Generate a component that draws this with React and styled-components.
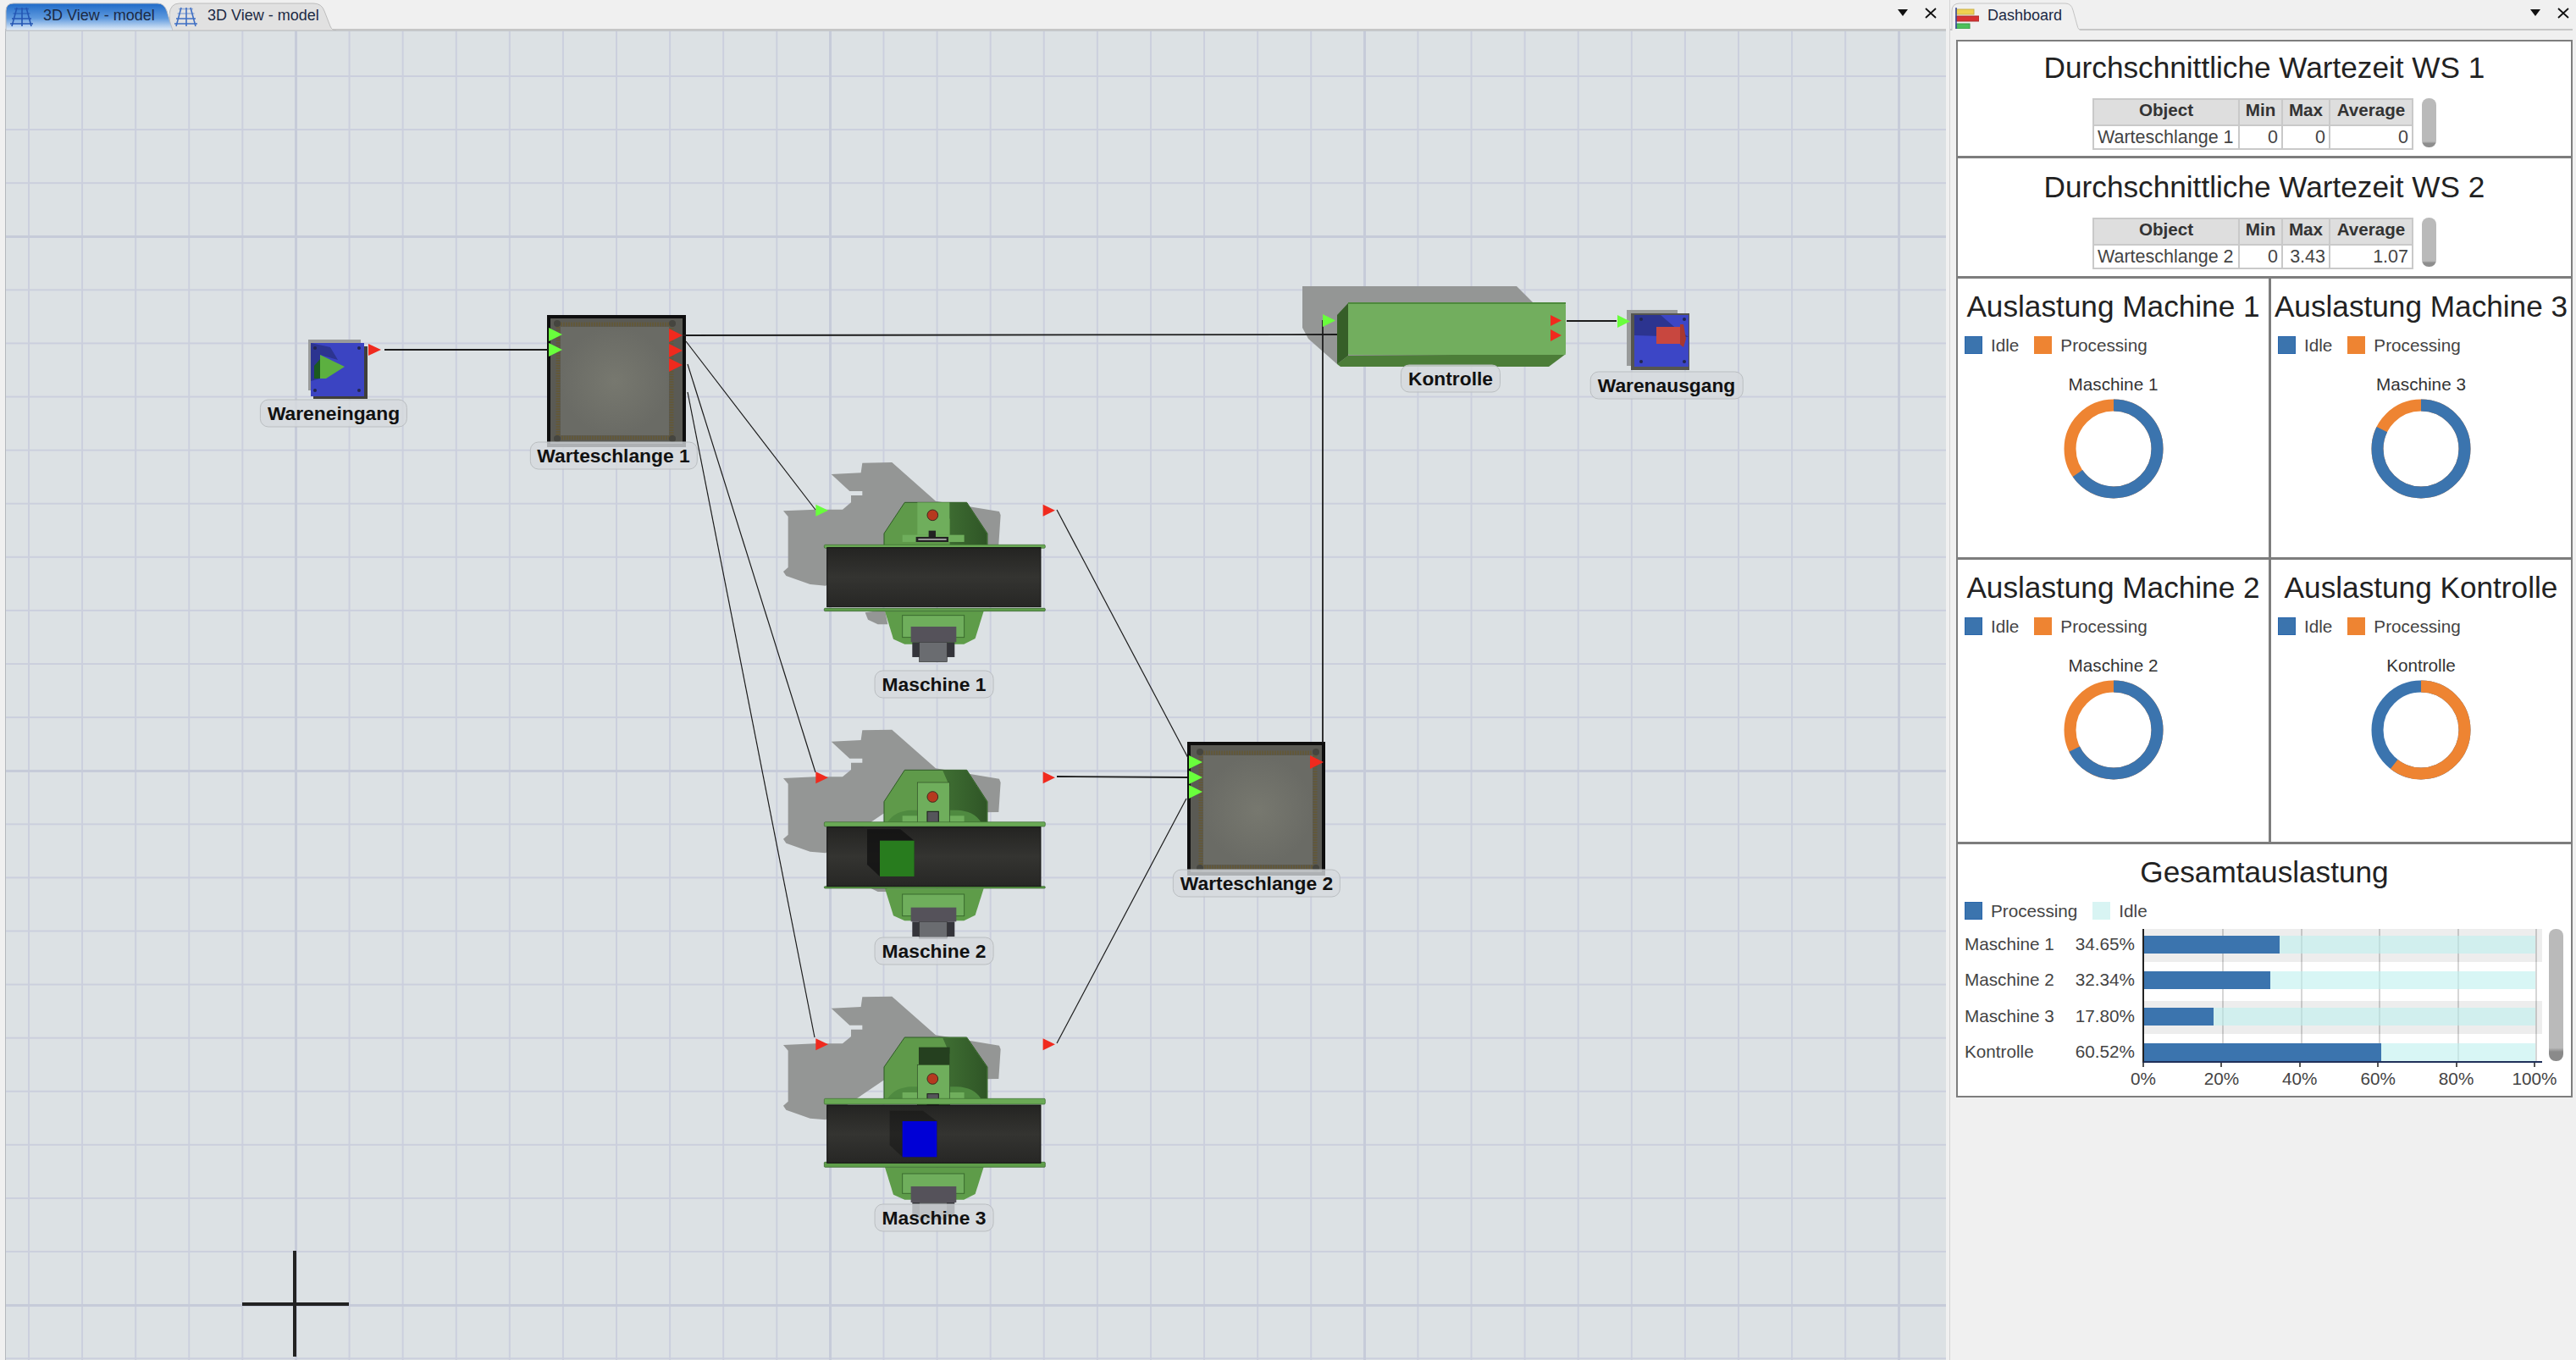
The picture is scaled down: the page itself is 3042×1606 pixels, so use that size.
import React from 'react';
import styled, { createGlobalStyle } from 'styled-components';

const GlobalStyle = createGlobalStyle`
    html, body {
        margin: 0;
        height: 100%;
        overflow: hidden;
        background: #f0f0f0;
        font-family: 'Liberation Sans', Arial, sans-serif;
    }
    #root {
        height: 100%;
    }
`;

const Main = styled.div`
    display: flex;
    width: 3042px;
    height: 1606px;
    background: #f0f0f0;
    color: #222;
`;

const LeftPane = styled.section`
    width: 2298px;
    padding-left: 6px;
    box-sizing: border-box;
    display: flex;
    flex-direction: column;
`;

const RightPane = styled.section`
    flex: 1;
    margin-left: 4px;
    padding-right: 4px;
    display: flex;
    flex-direction: column;
    border-left: 1px solid #d4d4d4;
    box-sizing: border-box;
`;

const TabBar = styled.div`
    height: 36px;
    box-sizing: border-box;
    display: flex;
    align-items: flex-end;
    border-bottom: 2px solid #c6c6c6;
    padding: 0 ${(p) => p.$endPad}px 0 ${(p) => p.$startPad}px;
`;

const Tab = styled.div`
    position: relative;
    z-index: ${(p) => (p.$front ? 1 : 0)};
    width: ${(p) => p.$width}px;
    height: 33px;
    margin-bottom: -2px;
    display: flex;
    align-items: center;
    gap: ${(p) => p.$gap || 12}px;
    padding-left: 5px;
    box-sizing: border-box;
    font-size: 18px;
    color: #1c2a44;
`;

const TabShape = styled.svg`
    position: absolute;
    left: 0;
    top: 0;
`;

const TabIcon = styled.svg`
    position: relative;
    flex: none;
`;

const TabText = styled.span`
    position: relative;
    padding-bottom: 2px;
`;

const PaneControls = styled.div`
    margin-left: auto;
    align-self: flex-start;
    display: flex;
    align-items: center;
    gap: 20px;
    height: 30px;
`;

const Canvas = styled.div`
    position: relative;
    flex: 1;
    border-left: 1px solid #b4b8bc;
    border-top: 1px solid #c4c8cc;
    background-color: #dce1e4;
    background-image:
        linear-gradient(to right, #c6cbd9 0 3px, transparent 3px),
        linear-gradient(to bottom, #c6cbd9 0 3px, transparent 3px),
        linear-gradient(to right, #cbcfdd 0 2px, transparent 2px),
        linear-gradient(to bottom, #cbcfdd 0 2px, transparent 2px);
    background-size: 631px 631px, 631px 631px, 63.1px 63.1px, 63.1px 63.1px;
    background-position: 341px 0, 0 241px, 26px 0, 0 52px;
    overflow: hidden;
`;

const Scene = styled.svg`
    display: block;
    position: absolute;
    left: 0;
    top: 0;
`;

const NodeLabel = styled.div`
    position: absolute;
    left: ${(p) => p.$x - 7}px;
    top: ${(p) => p.$y - 37}px;
    transform: translate(-50%, -50%);
    height: 31px;
    line-height: 31px;
    padding: 0 8px;
    border: 1.5px solid #babec1;
    border-radius: 10px;
    background: rgba(214, 218, 221, 0.8);
    font-size: 22.8px;
    font-weight: 700;
    color: #111;
    white-space: nowrap;
`;

const Board = styled.div`
    margin: 11px 0 0 7px;
    border: 2px solid #7d7d7d;
    border-bottom: 0;
    background: #fff;
`;

const WaitPanel = styled.div`
    height: ${(p) => p.$height}px;
    box-sizing: border-box;
    border-bottom: 3px solid #7d7d7d;
    padding-top: ${(p) => p.$top}px;
    display: flex;
    flex-direction: column;
    align-items: center;
`;

const Title = styled.h2`
    margin: 0;
    font-size: 35.2px;
    font-weight: 400;
    line-height: 40px;
    color: #222;
    white-space: nowrap;
`;

const TableRow = styled.div`
    margin-top: 16px;
    display: flex;
    gap: 10px;
`;

const Table = styled.table`
    border-collapse: collapse;
    table-layout: fixed;
    width: 377px;
    color: #444;
`;

const HeadCell = styled.th`
    height: 30px;
    box-sizing: border-box;
    padding: 0 0 5px;
    border: 2px solid #c9c9c9;
    background: #dedede;
    font-size: 20.6px;
    line-height: 24px;
    font-weight: 700;
    color: #333;
    text-align: center;
`;

const Cell = styled.td`
    height: 28px;
    box-sizing: border-box;
    padding: 0 4px;
    border: 2px solid #c9c9c9;
    font-size: 21.5px;
    line-height: 24px;
    text-align: ${(p) => (p.$right ? 'right' : 'left')};
    white-space: nowrap;
    overflow: hidden;
`;

const ScrollThumb = styled.div`
    width: 17px;
    border-radius: 8px;
    background: linear-gradient(to bottom, #bababa 0 88%, #8e8e8e 92%);
    height: ${(p) => p.$height}px;
    flex: none;
`;

const DonutGrid = styled.div`
    display: grid;
    grid-template-columns: 367px 1fr;
    grid-template-rows: 332px 336px;
`;

const DonutCell = styled.div`
    box-sizing: border-box;
    padding-top: 13px;
    border-bottom: 3px solid #7d7d7d;
    border-left: ${(p) => (p.$divider ? '3px solid #7d7d7d' : '0')};
    display: flex;
    flex-direction: column;
    align-items: center;
`;

const Legend = styled.div`
    align-self: flex-start;
    display: flex;
    gap: 18px;
    height: 21px;
    margin: 15px 0 0 ${(p) => p.$left}px;
    font-size: 20.7px;
    color: #444;
`;

const LegendItem = styled.div`
    display: flex;
    align-items: center;
    gap: 10px;
    line-height: 21px;
`;

const Swatch = styled.span`
    width: 21px;
    height: 21px;
    box-sizing: border-box;
    background: ${(p) => p.$color};
    border: 1px solid ${(p) => p.$edge || p.$color};
`;

const DonutName = styled.div`
    margin-top: 24px;
    height: 24px;
    line-height: 24px;
    font-size: 20.7px;
    color: #333;
`;

const DonutSvg = styled.svg`
    display: block;
    margin-top: 5px;
`;

const TotalPanel = styled.div`
    height: 299px;
    box-sizing: border-box;
    padding-top: 13px;
    border-bottom: 2px solid #7d7d7d;
    display: flex;
    flex-direction: column;
    align-items: center;
`;

const TotalChart = styled.div`
    align-self: flex-start;
    margin: 11px 0 0 8px;
    display: flex;
`;

const RowLabels = styled.div`
    width: 210px;
    display: flex;
    flex-direction: column;
    gap: 3.3px;
    font-size: 20.7px;
    color: #444;
`;

const RowLabel = styled.div`
    height: 39px;
    line-height: 36px;
    display: flex;
    justify-content: space-between;
    padding-right: 9px;
`;

const PlotColumn = styled.div`
    width: 472px;
`;

const Plot = styled.div`
    position: relative;
    height: 156px;
    overflow: hidden;
    border-left: 2px solid #222;
    border-bottom: 2px solid #20305a;
    display: flex;
    flex-direction: column;
    gap: 3.3px;
`;

const GridLine = styled.div`
    position: absolute;
    top: 0;
    bottom: 0;
    left: ${(p) => p.$pct * 4.62}px;
    width: 2px;
    background: #d6d6d6;
`;

const Band = styled.div`
    position: relative;
    flex: none;
    height: 39px;
    box-sizing: border-box;
    padding-top: 8px;
    background: ${(p) => (p.$shaded ? 'rgba(0, 0, 0, 0.07)' : 'transparent')};
`;

const BarStack = styled.div`
    display: flex;
    width: 462px;
    height: 21px;
`;

const BarPart = styled.div`
    height: 100%;
    background: ${(p) => p.$color};
`;

const AxisTicks = styled.div`
    display: flex;
    justify-content: space-between;
    width: 464px;
    height: 5px;
`;

const Tick = styled.span`
    width: 2px;
    background: #555;
`;

const AxisLabels = styled.div`
    display: flex;
    justify-content: space-between;
    width: 464px;
    margin-top: 2px;
    font-size: 20.7px;
    color: #444;
`;

const AxisLabel = styled.span`
    width: 2px;
    display: flex;
    justify-content: center;
    white-space: nowrap;
`;

const ChartScroll = styled(ScrollThumb)`
    margin-left: 8px;
    background: linear-gradient(to bottom, #bababa 0 90%, #8a8a8a 93%);
`;

const BLUE = '#3b74ae';
const ORANGE = '#ee8432';

const GridIcon = ({ faded }) => (
    <TabIcon width="28" height="24" viewBox="0 0 28 24" fill="none" stroke={faded ? '#3f6fc4' : '#2456b4'} strokeWidth="1.6">
        <path d="M6 2.5H23M4.5 8H24.5" opacity={faded ? 0.45 : 0.7} />
        <path d="M3 14H26M1 20H28" />
        <path d="M9 1L3 23M15 1V23M20 1L26 23" />
    </TabIcon>
);

const ChartIcon = () => (
    <TabIcon width="28" height="28" viewBox="0 0 28 28">
        <rect x="1" y="5" width="21" height="6" fill="#f0d050" stroke="#c9b24a" />
        <rect x="1" y="13" width="27" height="6" fill="#d83232" stroke="#a82a2a" />
        <rect x="1" y="22" width="16" height="6" fill="#4cc05a" stroke="#3a9a48" />
        <path d="M1 3V30" stroke="#3a4a9a" strokeWidth="1.6" />
    </TabIcon>
);

const PaneButtons = () => (
    <PaneControls>
        <svg width="12" height="8" viewBox="0 0 12 8"><path d="M0 0H12L6 8Z" fill="#111" /></svg>
        <svg width="14" height="13" viewBox="0 0 14 13"><path d="M1 1L13 12M13 1L1 12" stroke="#111" strokeWidth="1.8" /></svg>
    </PaneControls>
);

const Port = ({ x, y, out, w = 16, h = 16 }) => (
    <polygon points={`${x},${y} ${x + w},${y + h / 2} ${x},${y + h}`} fill={out ? '#f02a1e' : '#69ff3c'} />
);

const Queue = ({ outer, core }) => {
    const [x, y, w, h] = outer;
    const [cx, cy, cw, ch] = core;
    return (
        <g>
            <rect x={x + 2} y={y + 2} width={w - 4} height={h - 4} fill="#5a5a54" stroke="#0e0e0e" strokeWidth="4" />
            <rect x={cx - 3} y={cy - 3} width={cw + 6} height={ch + 6} fill="none" stroke="#62583a" strokeWidth="5" strokeDasharray="2 1" />
            <rect x={cx} y={cy} width={cw} height={ch} fill="url(#queueCore)" />
            {[[cx - 4, cy - 4], [cx + cw + 4, cy - 4], [cx - 4, cy + ch + 4], [cx + cw + 4, cy + ch + 4]].map(([a, b]) => (
                <circle key={`${a}-${b}`} cx={a} cy={b} r="4" fill="#45453f" />
            ))}
        </g>
    );
};

const Source = () => (
    <g>
        <rect x="364" y="401" width="62" height="60" fill="#999b9b" />
        <rect x="370" y="409" width="64" height="62" fill="#3f3f3a" />
        <rect x="367" y="405" width="63" height="63" fill="#3b44c2" />
        <polygon points="367,405 390,410 399,425 378,419 378,447 367,450" fill="#2c3490" />
        <polygon points="371,447 371,432 378,424 378,447" fill="#1b5a1f" />
        <polygon points="378,419 407,433 385,447 378,447" fill="#5cb040" />
        {[[372, 411], [424, 411], [372, 461], [424, 461]].map(([a, b]) => (
            <circle key={`${a}-${b}`} cx={a} cy={b} r="2" fill="#23264f" />
        ))}
    </g>
);

const Sink = () => (
    <g>
        <rect x="1921" y="366" width="60" height="66" fill="#999b9b" />
        <rect x="1926" y="370" width="69" height="67" fill="#55554f" />
        <rect x="1930" y="372" width="64" height="61" fill="#3c46c6" />
        <polygon points="1930,372 1961,372 1976,385 1994,398 1930,396" fill="#2c3490" />
        <rect x="1956" y="386" width="28" height="20" fill="#c8473f" />
        <polygon points="1984,383 1988,383 1991,400 1988,410 1984,407" fill="#a83830" />
        {[[1938, 377], [1989, 377], [1938, 427], [1989, 427]].map(([a, b]) => (
            <circle key={`${a}-${b}`} cx={a} cy={b} r="2" fill="#23264f" />
        ))}
    </g>
);

const Kontrolle = () => (
    <g>
        <polygon points="1538,338 1791,338 1811,358 1811,420 1579,430 1545,400 1538,387" fill="#949695" />
        <polygon points="1579,372 1592,358 1592,420 1579,430" fill="#365f28" />
        <polygon points="1579,430 1592,420 1849,418 1829,433 1583,433" fill="#4c7d38" />
        <rect x="1592" y="358" width="257" height="61" rx="2" fill="#72ae5e" />
        <path d="M1592 358H1849" stroke="#4d8a3c" strokeWidth="2" />
    </g>
);

// machine parts are given in 3x crop units, the state of the head differs per machine
const MACHINES = [
    { oy: 530, dy: 0, top: 190, mid: 300, rail: 340, railH: 12, belt: 350, beltEnd: 560, low: 565, lowH: 10, panel: 190, panelEnd: 305, btn: 235, plate: 305, plateH: 25, bodyTop: 575, bodyEnd: 692, inner: 590, innerEnd: 668, box: 630, boxEnd: 685, legEnd: 738, tagEnd: 755 },
    { oy: 850, dy: -13, top: 178, mid: 290, rail: 362, railH: 16, belt: 380, beltEnd: 590, low: 590, lowH: 7, panel: 222, panelEnd: 372, btn: 273, square: 325, plate: 340, plateH: 22, bodyTop: 598, bodyEnd: 712, inner: 618, innerEnd: 695, box: 665, boxEnd: 715, legEnd: 768, tagEnd: 776, item: { x: 417, y: 428, color: '#287c1e', sx: 372, sy: 388, shade: 0.8 } },
    { oy: 1170, dy: -28, top: 165, mid: 270, rail: 382, railH: 20, belt: 405, beltEnd: 610, low: 607, lowH: 18, panel: 262, panelEnd: 405, btn: 312, square: 365, slot: 200, plate: 360, plateH: 40, bodyTop: 625, bodyEnd: 740, inner: 648, innerEnd: 718, box: 693, boxEnd: 750, legEnd: 800, tagEnd: 810, item: { x: 497, y: 462, color: '#0000d6', sx: 452, sy: 425, shade: 0.45 } },
];

const SHADOW = '245,90 350,85 355,50 460,48 615,185 840,222 845,235 838,340 430,345 225,485 170,480 85,450 75,435 92,420 92,240 75,220 190,215 285,215 315,190 315,165 355,165 355,150 310,150';

const ItemOnBelt = ({ item }) => {
    const { x, y, sx, sy, color, shade } = item;
    return (
        <g>
            <polygon points={`${sx},${sy} ${sx + 118},${sy} ${x + 122},${y} ${x + 122},${y + 127} ${x},${y + 127} ${sx},${y + 85}`} fill="#111" opacity={shade} />
            <rect x={x} y={y} width="122" height="127" fill={color} />
        </g>
    );
};

const Machine = ({ m }) => (
    <g transform={`translate(900 ${m.oy}) scale(0.3333)`}>
        <polygon points={SHADOW} fill="#949695" transform={`translate(0 ${m.dy})`} />
        <polygon points={`365,${580 + m.dy} 375,${605 + m.dy} 410,${622 + m.dy} 445,${622 + m.dy} 435,${570 + m.dy}`} fill="#949695" />
        <polygon points={`505,${m.top} 725,${m.top} 798,${m.mid} 798,${m.rail + 4} 432,${m.rail + 4} 432,${m.mid}`} fill="#5f9a4a" stroke="#2e5a24" strokeWidth="3" />
        <polygon points={`640,${m.top + 2} 725,${m.top + 2} 796,${m.mid} 796,${m.rail} 665,${m.rail} 665,${m.top + 60}`} fill="url(#hoodShade)" />
        {m.slot && <rect x="555" y={m.slot} width="110" height={m.panel - m.slot} fill="#25401f" />}
        {m.square && <path d={`M445 ${m.rail} Q470 ${m.plate - 18} 530 ${m.plate - 20} H690 Q750 ${m.plate - 18} 775 ${m.rail}Z`} fill="#4f8a40" />}
        <rect x="497" y={m.plate} width="219" height={m.plateH} fill="#6fae5c" />
        <rect x="550" y={m.panel} width="114" height={m.panelEnd - m.panel} fill="#6fae5c" stroke={m.square ? '#2c4a24' : 'none'} strokeWidth="2" />
        <circle cx="604" cy={m.btn} r="19" fill="#b5391f" stroke="#3d2a1f" strokeWidth="3" />
        {m.square ? (
            <rect x="585" y={m.square} width="40" height="38" fill="#55555a" stroke="#1a1a1a" strokeWidth="3" />
        ) : (
            <g>
                <rect x="590" y="290" width="25" height="22" fill="#222" />
                <rect x="545" y="312" width="115" height="18" fill="#222" />
                <rect x="553" y="318" width="100" height="6" fill="#999" />
            </g>
        )}
        <polygon points={`435,${m.bodyTop} 785,${m.bodyTop} 755,${m.bodyEnd - 20} 715,${m.bodyEnd} 505,${m.bodyEnd} 465,${m.bodyEnd - 18}`} fill="#5e9c49" />
        <rect x="497" y={m.inner} width="219" height={m.innerEnd - m.inner} fill="#6fae5c" stroke="#3a6a2e" strokeWidth="3" />
        <rect x="532" y={m.boxEnd} width="150" height={m.legEnd - m.boxEnd} fill="#34343a" />
        <rect x="557" y={m.boxEnd} width="98" height={m.tagEnd - m.boxEnd} fill="#6a6c70" stroke="#333" strokeWidth="2" />
        <rect x="527" y={m.box} width="161" height={m.boxEnd - m.box} fill="#55525a" />
        <rect x="220" y={m.rail} width="783" height={m.railH} rx="4" fill="#6aa955" stroke="#3a6a2e" strokeWidth="2" />
        <rect x="220" y={m.low} width="783" height={m.lowH} rx="3" fill="#5f9e4a" stroke="#2e5a24" strokeWidth="2" />
        <rect x="230" y={m.belt} width="757" height={m.beltEnd - m.belt} fill="url(#beltFace)" stroke="#111" strokeWidth="3" />
        {m.item && <ItemOnBelt item={m.item} />}
        <Port x={190} y={197 + m.dy} w={44} h={42} out={m.dy !== 0} />
        <Port x={995} y={197 + m.dy} w={43} h={42} out />
    </g>
);

const LINKS = [
    [454, 413, 647, 413, 2],
    [806, 396, 1579, 395, 1.8],
    [810, 403, 963, 602, 1.2],
    [812, 430, 963, 912, 1.2],
    [812, 463, 962, 1225, 1.2],
    [1248, 602, 1403, 895, 1.2],
    [1248, 917, 1402, 918, 1.8],
    [1248, 1232, 1401, 943, 1.2],
    [1562, 877, 1562, 378, 1.8],
    [1850, 379, 1909, 379, 1.8],
];

const SceneLabels = [
    ['Wareneingang', 394, 488],
    ['Warteschlange 1', 724.5, 538],
    ['Kontrolle', 1713, 446.5],
    ['Warenausgang', 1968, 455],
    ['Maschine 1', 1103, 807.5],
    ['Maschine 2', 1103, 1122.5],
    ['Maschine 3', 1103, 1438],
    ['Warteschlange 2', 1484, 1043],
];

const ModelView = () => (
    <Canvas>
        <Scene width="2290" height="1569" viewBox="7 37 2290 1569">
            <defs>
                <radialGradient id="queueCore">
                    <stop offset="0" stopColor="#77786f" />
                    <stop offset="1" stopColor="#6a6b65" />
                </radialGradient>
                <linearGradient id="hoodShade" x1="0" y1="0" x2="1" y2="0">
                    <stop offset="0" stopColor="#3f6f33" />
                    <stop offset="1" stopColor="#2f5526" />
                </linearGradient>
                <linearGradient id="beltFace" x1="0" y1="0" x2="0" y2="1">
                    <stop offset="0" stopColor="#242422" />
                    <stop offset="0.5" stopColor="#343431" />
                    <stop offset="1" stopColor="#272725" />
                </linearGradient>
            </defs>
            <Source />
            <Sink />
            <Kontrolle />
            <Queue outer={[646, 372, 164, 156]} core={[662, 386, 128, 128]} />
            <Queue outer={[1402, 876, 163, 158]} core={[1421, 892, 129, 129]} />
            {MACHINES.map((m) => (
                <Machine key={m.oy} m={m} />
            ))}
            {LINKS.map(([a, b, c, d, w]) => (
                <line key={`${a}-${b}-${c}`} x1={a} y1={b} x2={c} y2={d} stroke="#1c1c1c" strokeWidth={w} />
            ))}
            <Port x={435} y={406} w={15} h={14} out />
            <Port x={648} y={387} />
            <Port x={648} y={405} />
            <Port x={790} y={388} out />
            <Port x={790} y={406} out />
            <Port x={790} y={423} out />
            <Port x={1404} y={892} />
            <Port x={1404} y={910} />
            <Port x={1404} y={927} />
            <Port x={1547} y={892} out />
            <Port x={1562} y={371} w={15} h={15} />
            <Port x={1831} y={372} w={13} h={13} out />
            <Port x={1831} y={389} w={13} h={14} out />
            <Port x={1910} y={372} w={15} h={15} />
            <path d="M348 1477V1602M286 1540H412" stroke="#222" strokeWidth="4" fill="none" />
        </Scene>
        {SceneLabels.map(([text, x, y]) => (
            <NodeLabel key={text} $x={x} $y={y}>{text}</NodeLabel>
        ))}
    </Canvas>
);

const WaitTable = ({ name, min, max, average }) => (
    <TableRow>
        <Table>
            <colgroup>
                <col width="172" />
                <col width="51" />
                <col width="56" />
                <col width="98" />
            </colgroup>
            <thead>
                <tr>
                    <HeadCell>Object</HeadCell>
                    <HeadCell>Min</HeadCell>
                    <HeadCell>Max</HeadCell>
                    <HeadCell>Average</HeadCell>
                </tr>
            </thead>
            <tbody>
                <tr>
                    <Cell>{name}</Cell>
                    <Cell $right>{min}</Cell>
                    <Cell $right>{max}</Cell>
                    <Cell $right>{average}</Cell>
                </tr>
            </tbody>
        </Table>
        <ScrollThumb $height={58} />
    </TableRow>
);

const Donut = ({ processing, processingFirst }) => {
    const r = 51.5;
    const c = 2 * Math.PI * r;
    const first = processingFirst ? processing : 100 - processing;
    return (
        <DonutSvg width="118" height="118" viewBox="0 0 118 118">
            <circle cx="59" cy="59" r={r} fill="none" strokeWidth="14" stroke={processingFirst ? BLUE : ORANGE} />
            <circle
                cx="59"
                cy="59"
                r={r}
                fill="none"
                strokeWidth="14"
                stroke={processingFirst ? ORANGE : BLUE}
                strokeDasharray={`${(first / 100) * c} ${c}`}
                transform="rotate(-90 59 59)"
            />
        </DonutSvg>
    );
};

const DONUTS = [
    { title: 'Auslastung Machine 1', name: 'Maschine 1', processing: 34.65 },
    { title: 'Auslastung Machine 3', name: 'Maschine 3', processing: 17.8, divider: true },
    { title: 'Auslastung Machine 2', name: 'Maschine 2', processing: 32.34 },
    { title: 'Auslastung Kontrolle', name: 'Kontrolle', processing: 60.52, processingFirst: true, divider: true },
];

const TOTALS = [
    { name: 'Maschine 1', value: 34.65 },
    { name: 'Maschine 2', value: 32.34 },
    { name: 'Maschine 3', value: 17.8 },
    { name: 'Kontrolle', value: 60.52 },
];

const TICKS = [0, 20, 40, 60, 80, 100];

const TotalUsage = () => (
    <TotalPanel>
        <Title>Gesamtauslastung</Title>
        <Legend $left={8}>
            <LegendItem><Swatch $color={BLUE} $edge="#2a67ac" />Processing</LegendItem>
            <LegendItem><Swatch $color="#d8f4f3" />Idle</LegendItem>
        </Legend>
        <TotalChart>
            <RowLabels>
                {TOTALS.map((row) => (
                    <RowLabel key={row.name}>
                        <span>{row.name}</span>
                        <span>{row.value.toFixed(2)}%</span>
                    </RowLabel>
                ))}
            </RowLabels>
            <PlotColumn>
                <Plot>
                    {TICKS.slice(1).map((t) => (
                        <GridLine key={t} $pct={t} />
                    ))}
                    {TOTALS.map((row, i) => (
                        <Band key={row.name} $shaded={i % 2 === 0}>
                            <BarStack>
                                <BarPart $color={BLUE} style={{ width: `${row.value}%` }} />
                                <BarPart $color="rgba(190, 240, 238, 0.6)" style={{ width: `${100 - row.value}%` }} />
                            </BarStack>
                        </Band>
                    ))}
                </Plot>
                <AxisTicks>
                    {TICKS.map((t) => (
                        <Tick key={t} />
                    ))}
                </AxisTicks>
                <AxisLabels>
                    {TICKS.map((t) => (
                        <AxisLabel key={t}>{t}%</AxisLabel>
                    ))}
                </AxisLabels>
            </PlotColumn>
            <ChartScroll $height={156} />
        </TotalChart>
    </TotalPanel>
);

const Dashboard = () => (
    <Board>
        <WaitPanel $height={138} $top={11}>
            <Title>Durchschnittliche Wartezeit WS 1</Title>
            <WaitTable name="Warteschlange 1" min="0" max="0" average="0" />
        </WaitPanel>
        <WaitPanel $height={142} $top={14}>
            <Title>Durchschnittliche Wartezeit WS 2</Title>
            <WaitTable name="Warteschlange 2" min="0" max="3.43" average="1.07" />
        </WaitPanel>
        <DonutGrid>
            {DONUTS.map((d) => (
                <DonutCell key={d.title} $divider={d.divider}>
                    <Title>{d.title}</Title>
                    <Legend $left={8}>
                        <LegendItem><Swatch $color={BLUE} $edge="#2a67ac" />Idle</LegendItem>
                        <LegendItem><Swatch $color={ORANGE} />Processing</LegendItem>
                    </Legend>
                    <DonutName>{d.name}</DonutName>
                    <Donut processing={d.processing} processingFirst={d.processingFirst} />
                </DonutCell>
            ))}
        </DonutGrid>
        <TotalUsage />
    </Board>
);

const App = () => (
    <Main>
        <GlobalStyle />
        <LeftPane>
            <TabBar $startPad={0} $endPad={11}>
                <Tab $width={194} $front>
                    <TabShape width="198" height="33" viewBox="0 0 198 33">
                        <defs>
                            <linearGradient id="tabActive" x1="0" y1="0" x2="0" y2="1">
                                <stop offset="0" stopColor="#1f6ac8" />
                                <stop offset="0.55" stopColor="#5f9ade" />
                                <stop offset="1" stopColor="#e6eff9" />
                            </linearGradient>
                        </defs>
                        <path d="M1 33V10Q1 1 10 1H180Q188 1 191 10L196 27Q198 33 198 33Z" fill="url(#tabActive)" stroke="#b8bcc2" />
                    </TabShape>
                    <GridIcon />
                    <TabText>3D View - model</TabText>
                </Tab>
                <Tab $width={197}>
                    <TabShape width="197" height="33" viewBox="0 0 197 33">
                        <path d="M1 33L0 14Q1 1 12 1H170Q180 1 183 10L190 28Q192 33 197 33Z" fill="#e1e1e1" stroke="#bdbdbd" />
                    </TabShape>
                    <GridIcon faded />
                    <TabText>3D View - model</TabText>
                </Tab>
                <PaneButtons />
            </TabBar>
            <ModelView />
        </LeftPane>
        <RightPane>
            <TabBar $startPad={1} $endPad={4}>
                <Tab $width={155} $gap={10}>
                    <TabShape width="155" height="33" viewBox="0 0 155 33">
                        <path d="M1 33V10Q1 1 10 1H135Q142 1 144 9L149 27Q150 33 155 33" fill="#f0f0f0" stroke="#c4c4c4" />
                    </TabShape>
                    <ChartIcon />
                    <TabText>Dashboard</TabText>
                </Tab>
                <PaneButtons />
            </TabBar>
            <Dashboard />
        </RightPane>
    </Main>
);

export default App;
